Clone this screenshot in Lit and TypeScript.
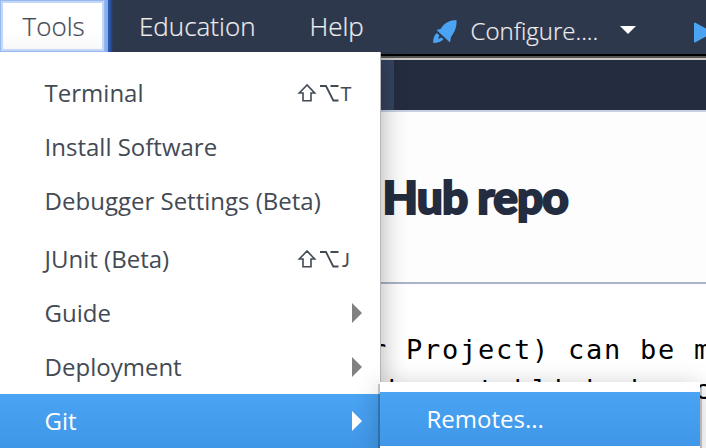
import { LitElement, html, css, svg } from "lit";
import { customElement } from "lit/decorators.js";

interface Item { label: string; key?: string; sub?: boolean; active?: boolean; gap?: boolean }

const ITEMS: Item[] = [
  { label: "Terminal", key: "T" },
  { label: "Install Software" },
  { label: "Debugger Settings (Beta)" },
  { label: "JUnit (Beta)", key: "J", gap: true },
  { label: "Guide", sub: true },
  { label: "Deployment", sub: true },
  { label: "Git", sub: true, active: true },
];

@customElement("app-menu")
class AppMenu extends LitElement {
  static styles = css`
    :host { display: block; box-sizing: border-box; width: 380px; height: 396px; padding-top: 14px; background: #fff; color: #434a54; font: 24px/54px "Open Sans", sans-serif; box-shadow: 1px 0 0 0 #b5b7b9, 2px 4px 24px rgba(0,0,0,.3); clip-path: inset(0 -40px 0 0); }
    .row { display: flex; height: 54px; padding: 0 18px 0 44.6px; align-items: center; justify-content: space-between; }
    .gap { margin-top: 4px; }
    .active { background: linear-gradient(#4aa3f3, #4097e8); color: #fff; }
    .key { display: flex; align-items: center; margin-right: 9px; }
    .letter { width: 14px; height: 53px; font: 18.5px/55px Lato, sans-serif; text-align: center; }
    .arrow { fill: #808080; }
    .active .arrow { fill: #fff; }
  `;
  render() {
    return ITEMS.map((i) => html`
      <div class="row ${i.gap ? "gap" : ""} ${i.active ? "active" : ""}">
        <span class="label">${i.label}</span>
        ${i.key ? html`<span class="key">
          <svg width="42" height="20" viewBox="0 0 42 20" fill="none" stroke="#434a54" stroke-width="1.6">
            ${svg`<path d="M10 2L2.3 10H6V17.7H14V10H17.7Z"/><path d="M23 3H29L36.3 17.5H41.5M33.5 3H41.5" stroke-width="1.8"/>`}
          </svg><span class="letter">${i.key}</span></span>` : ""}
        ${i.sub ? html`<svg class="arrow" width="10" height="20"><path d="M0 0L10 10L0 20Z"/></svg>` : ""}
      </div>`);
  }
}

@customElement("app-root")
class AppRoot extends LitElement {
  static styles = css`
    :host { display: block; position: relative; width: 706px; height: 448px; overflow: hidden; background: #fff; font-family: "Open Sans", sans-serif; }
    .bar { display: flex; height: 54px; background: #2e384d; color: #eee; font-weight: 300; font-size: 26px; line-height: 53px; white-space: nowrap; -webkit-text-stroke: .2px; }
    .bar > * { flex: none; }
    .tab { box-sizing: border-box; width: 105px; height: 52px; border: 3px solid #c4d7f7; outline: 1px solid #98b8f0; outline-offset: -1px; background: linear-gradient(#fff 60%, #f8f8f8); color: #434a54; padding-left: 19.5px; line-height: 47px; }
    .glow { width: 9px; height: 52px; background: linear-gradient(90deg, #88adf0 0 3px, #2856ad 3px 5px, #274b8b 6px, #2e384d 8px); }
    .education { margin-left: 25px; width: 170.5px; }
    .help { width: 122.5px; }
    .rocket { margin-top: 18px; width: 26px; height: 27px; }
    .configure { margin-left: 12.5px; width: 149.5px; font-size: 24px; line-height: 62px; }
    .caret { margin-top: 26px; width: 16px; height: 8px; fill: #fff; }
    .play { margin: 22px 0 0 57.5px; width: 16px; height: 21px; fill: #4aa3f3; }
    .rule { height: 6px; background: linear-gradient(#000 0 2px, #555 2px 4px, #c9c6c4 4px); }
    .tabs { height: 50px; padding-left: 394px; background: #34435e; }
    .tabs-rest { height: 50px; background: #242c3f; }
    .head { box-sizing: border-box; height: 174px; padding: 55px 0 0 382.5px; border-top: 2px solid #c6d0e2; border-bottom: 2px solid #aab3c7; background: #fdfdfd; color: #242c3f; font: 900 46px/60px Lato, sans-serif; letter-spacing: -.9px; -webkit-text-stroke: 2px #242c3f; white-space: pre; }
    .doc { padding: 46px 0 0 370px; color: #000; font: 27px/40px "DejaVu Sans Mono", monospace; letter-spacing: 1.745px; white-space: pre; }
    app-menu { position: absolute; left: 0; top: 52px; }
    .submenu { position: absolute; left: 380px; top: 382px; width: 320px; height: 80px; padding-top: 10px; box-sizing: border-box; background: #fff; box-shadow: -2px 2px 0 rgba(0,0,0,.2), 2px 2px 0 rgba(0,0,0,.2), 0 4px 24px rgba(0,0,0,.22); }
    .remote { height: 54px; padding-left: 46.5px; background: linear-gradient(#4aa3f3, #4097e8); color: #fff; font-size: 24px; line-height: 54px; }
  `;
  render() {
    return html`
      <nav class="bar">
        <span class="tab">Tools</span><span class="glow"></span>
        <span class="education">Education</span><span class="help">Help</span>
        <svg class="rocket" viewBox="0 0 26 27" fill="#4aa3f3"><path d="M24.5 2C18 2 12 5 8.5 11L4.5 12L18 24.5L19 19C23 14 25 8 24.5 2Z"/><path d="M5 15C2 17 1 21 1.2 25C5 25 9 24 11.5 21.5L9.5 19.5L6 21L7.5 17.5Z"/></svg>
        <span class="configure">Configure....</span>
        <svg class="caret"><path d="M0 0H16L8 8Z"/></svg>
        <svg class="play"><path d="M0 1.5Q0 0 1.5 .8L16 8.5V12.5L1.5 20.2Q0 21 0 19.5Z"/></svg>
      </nav>
      <div class="rule"></div>
      <div class="tabs"><div class="tabs-rest"></div></div>
      <header class="head">Hub repo</header>
      <main class="doc">r Project) can be m
 be established a c</main>
      <app-menu></app-menu>
      <div class="submenu"><div class="remote">Remotes...</div></div>`;
  }
}
